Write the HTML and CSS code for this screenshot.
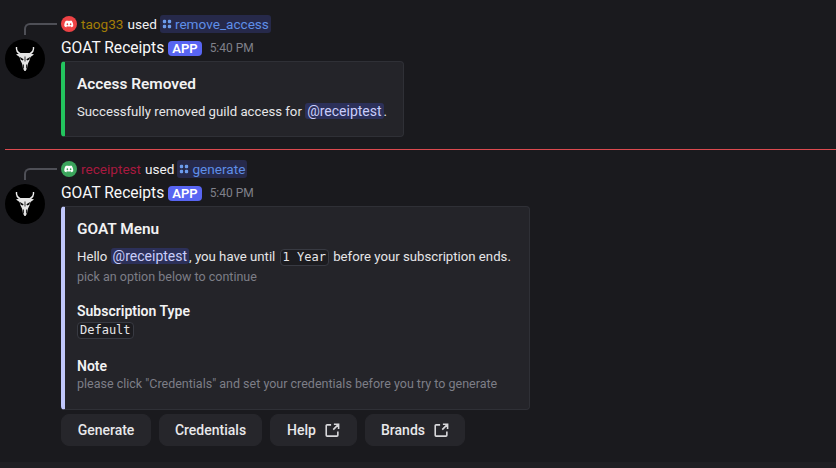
FILE: index.html
```html
<!DOCTYPE html>
<html lang="en">
<head>
<meta charset="utf-8">
<title>GOAT Receipts</title>
<link rel="stylesheet" href="styles.css">
</head>
<body>
<svg class="defs" width="0" height="0" aria-hidden="true">
  <symbol id="discord" viewBox="0 0 24 24"><path fill="#fff" d="M19.300 5.400A16 16 0 0 0 15.300 4.100l-.5 1.100a15 15 0 0 0-5.600 0l-.5-1.100a16 16 0 0 0-4 1.300C2.100 9.300 1.400 13 1.800 16.700a16 16 0 0 0 4.900 2.500l1.100-1.700c-.6-.2-1.200-.5-1.700-.8l.4-.3a11.500 11.500 0 0 0 10 0l.4.3c-.5.3-1.100.6-1.700.8l1.100 1.700a16 16 0 0 0 4.900-2.500c.5-4.300-.8-8-2.900-11.300ZM8.500 14.500c-1 0-1.800-.9-1.800-2s.8-2 1.800-2 1.800.9 1.800 2-.8 2-1.800 2Zm7 0c-1 0-1.800-.9-1.800-2s.8-2 1.800-2 1.800.9 1.800 2-.8 2-1.800 2Z"/></symbol>
  <symbol id="slash" viewBox="0 0 12 12"><g fill="currentColor"><rect x="1" y="1" width="4" height="4" rx="1.500"/><rect x="7" y="1" width="4" height="4" rx="1.500"/><rect x="1" y="7" width="4" height="4" rx="1.500"/><rect x="7" y="7" width="4" height="4" rx="1.500"/></g></symbol>
  <symbol id="goat" viewBox="0 0 40 40">
    <circle cx="20" cy="20" r="20" fill="#000"/>
    <path fill="none" stroke="#f0f0f0" stroke-width="1.400" d="M11.500 8c-.4 3 1 5.500 4 7M28.500 8c.4 3-1 5.500-4 7"/>
    <path fill="#e4e4e4" d="M11 15.500l4.500-1.500h9l4.500 1.500-3.500 2.500-1 3.500-1.500 3-1 5-1.500 2.500h-1l-1.500-2.500-1-5-1.500-3-1-3.500Z"/>
    <path fill="#000" d="M15 18l3.600 2.200-.7 1.200-2.300-1ZM25 18l-3.600 2.200.7 1.200 2.300-1ZM19.600 17.500h.8v5h-.8ZM17.800 25.500h1v4h-1ZM21.200 25.500h1v4h-1Z"/>
  </symbol>
  <symbol id="external" viewBox="0 0 16 16"><path fill="none" stroke="currentColor" stroke-width="1.700" d="M6.500 2H2.300a1 1 0 0 0-1 1v10a1 1 0 0 0 1 1h10.400a1 1 0 0 0 1-1V9M9.500 1.300h5v5M14.300 1.500 8.800 7"/></symbol>
</svg>
<main class="chat">
  <article class="msg msg-first">
    <span class="spine"></span>
    <div class="used">
      <svg class="badge badge-red"><use href="#discord"/></svg>
      <span class="user user-gold">taog33</span>
      <span class="used-word">used</span>
      <span class="command"><svg class="cmd-icon"><use href="#slash"/></svg>remove_access</span>
    </div>
    <svg class="avatar"><use href="#goat"/></svg>
    <div class="body">
      <h2 class="head"><span class="name">GOAT Receipts</span><span class="app">APP</span><time class="time">5:40 PM</time></h2>
      <section class="embed embed-green">
        <h3 class="embed-title">Access Removed</h3>
        <p class="embed-text">Successfully removed guild access for <span class="mention">@receiptest</span>.</p>
      </section>
    </div>
  </article>
  <hr class="divider">
  <article class="msg">
    <span class="spine"></span>
    <div class="used">
      <svg class="badge badge-green"><use href="#discord"/></svg>
      <span class="user user-crimson">receiptest</span>
      <span class="used-word">used</span>
      <span class="command"><svg class="cmd-icon"><use href="#slash"/></svg>generate</span>
    </div>
    <svg class="avatar"><use href="#goat"/></svg>
    <div class="body">
      <h2 class="head"><span class="name">GOAT Receipts</span><span class="app">APP</span><time class="time">5:40 PM</time></h2>
      <section class="embed embed-lilac">
        <h3 class="embed-title">GOAT Menu</h3>
        <p class="embed-text">Hello <span class="mention">@receiptest</span>, you have until <code class="code code-inline">1 Year</code> before your subscription ends.</p>
        <p class="hint hint-pick">pick an option below to continue</p>
        <h4 class="field">Subscription Type</h4>
        <code class="code code-block">Default</code>
        <h4 class="field field-note">Note</h4>
        <p class="hint hint-note">please click "Credentials" and set your credentials before you try to generate</p>
      </section>
      <div class="buttons">
        <button class="btn btn-generate">Generate</button>
        <button class="btn btn-cred">Credentials</button>
        <button class="btn btn-help">Help<svg class="ext"><use href="#external"/></svg></button>
        <button class="btn btn-brands">Brands<svg class="ext"><use href="#external"/></svg></button>
      </div>
    </div>
  </article>
</main>
<div class="composer-edge"></div>
</body>
</html>
```
FILE: styles.css
```css
* { box-sizing: border-box; }
html, body { margin: 0; height: 100%; }
body {
  background: #1a1a1e;
  color: #efeff1;
  font-family: Roboto, "Noto Sans", "Liberation Sans", sans-serif;
  overflow: hidden;
  position: relative;
}
.defs { position: absolute; }
.chat { padding-top: 15px; }
.msg {
  position: relative;
  display: grid;
  grid-template-columns: 40px 1fr;
  column-gap: 16px;
  padding-left: 5px;
}
.spine {
  position: absolute;
  left: 24px;
  top: 8px;
  width: 33px;
  height: 12px;
  border-left: 2px solid #4e4f56;
  border-top: 2px solid #4e4f56;
  border-top-left-radius: 6px;
}
.used {
  grid-column: 2;
  height: 18px;
  display: flex;
  align-items: center;
  font-size: 13.6px;
  line-height: 18px;
  white-space: nowrap;
}
.badge { width: 16px; height: 16px; border-radius: 50%; padding: 2.5px; margin-right: 4px; }
.badge-red { background: #ed4245; }
.badge-green { background: #3ba55c; }
.user { margin-right: 4px; }
.user-gold { color: #a27d06; }
.user-crimson { color: #a8193f; }
.used-word { margin-right: 3px; color: #f1f1f3; }
.command {
  display: inline-flex;
  align-items: center;
  height: 18px;
  padding: 0 2px 0 2px;
  border-radius: 3px;
  background: #26294a;
  color: #5f8fe8;
}
.cmd-icon { width: 10px; height: 10px; margin-right: 3px; color: #6c9cec; }
.avatar { grid-column: 1; width: 40px; height: 40px; margin-top: 6px; }
.body { grid-column: 2; min-width: 0; }
.head {
  margin: 5px 0 0;
  height: 20px;
  display: flex;
  align-items: center;
  font-weight: 400;
}
.name { font-size: 15.6px; font-weight: 400; color: #f8f8f9; }
.app {
  margin-left: 4px;
  height: 15px;
  padding: 0 4px;
  border-radius: 4px;
  background: #5865f2;
  color: #fff;
  font-size: 13px;
  font-weight: 600;
  line-height: 15px;
}
.time { margin-left: 8px; font-size: 12px; color: #80818a; }
.embed {
  margin-top: 3px;
  border: 1px solid #2f3036;
  border-left: 4px solid;
  border-radius: 4px;
  background: #242429;
  padding: 12px 16px 0 12px;
}
.embed-green { border-left-color: #23c55e; width: 343px; height: 76px; }
.embed-lilac { border-left-color: #c0c7fb; width: 469px; height: 204px; }
.embed-title {
  margin: 0;
  font-size: 15.4px;
  line-height: 20px;
  font-weight: 600;
  color: #f2f2f3;
}
.embed-text {
  margin: 7px 0 0;
  font-size: 13.2px;
  line-height: 20px;
  color: #e6e6e8;
  white-space: nowrap;
}
.mention {
  padding: 0 2px;
  border-radius: 3px;
  background: #2c3059;
  color: #c9cdfb;
  font-size: 14px;
}
.code {
  display: inline-block;
  padding: 0 2px;
  border: 1px solid #383a42;
  border-radius: 4px;
  background: #1c1c20;
  color: #e6e6e8;
  font-family: "DejaVu Sans Mono", "Liberation Mono", monospace;
  font-size: 12px;
  line-height: 15px;
  vertical-align: baseline;
}
.code-inline { margin: 0 1px; }
.code-block { display: block; width: fit-content; margin-top: 2px; }
.hint {
  margin: 0;
  font-size: 12.5px;
  line-height: 16px;
  color: #7d7e87;
  white-space: nowrap;
}
.hint-pick { margin-top: 2px; }
.hint-note { margin-top: 1px; }
.field {
  margin: 17px 0 0;
  font-size: 14px;
  line-height: 18px;
  font-weight: 600;
  color: #f2f2f3;
}
.field-note { margin-top: 18px; }
.buttons { display: flex; gap: 8px; margin-top: 4px; }
.btn {
  display: flex;
  align-items: center;
  justify-content: center;
  height: 32px;
  padding: 0;
  border: 1px solid #26262b;
  border-radius: 8px;
  background: #26262b;
  color: #e8e8ea;
  font: 500 14px Roboto, "Noto Sans", sans-serif;
}
.btn-generate { width: 90px; }
.btn-cred { width: 103px; }
.btn-help { width: 87px; }
.btn-brands { width: 100px; }
.ext { width: 15px; height: 15px; margin-left: 9px; color: #d8d8db; }
.divider {
  margin: 12px 0 10px 5px;
  border: 0;
  height: 1px;
  background: #dc4a4f;
}
.composer-edge {
  position: absolute;
  left: 0;
  right: 0;
  top: 462px;
  bottom: 0;
  background: #1f1f23;
}
```
